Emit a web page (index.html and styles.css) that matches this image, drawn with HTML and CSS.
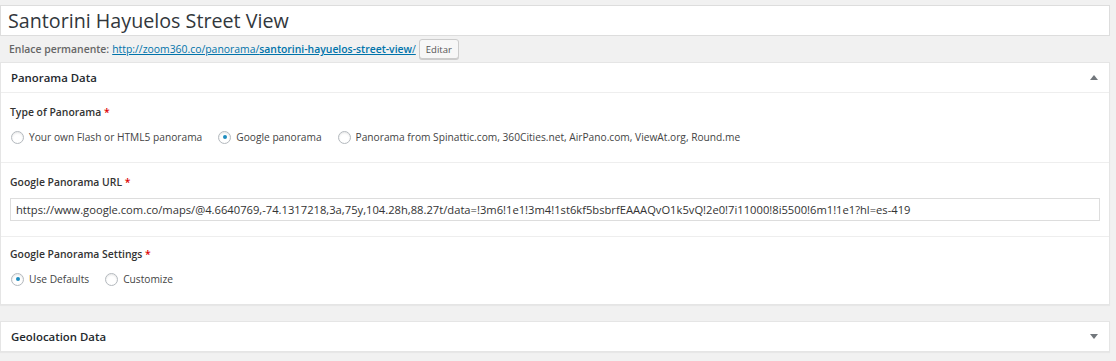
FILE: index.html
```html
<!DOCTYPE html>
<html lang="es">
<head>
    <meta charset="UTF-8">
    <meta name="viewport" content="width=device-width, initial-scale=1.0">
    <title>Editar Panorama</title>
    <link rel="stylesheet" href="styles.css">
</head>
<body>
    <div class="wrap">
        <input type="text" class="title-input" value="Santorini Hayuelos Street View">
        <div class="permalink">
            <strong>Enlace permanente:</strong>
            <a href="#">http://zoom360.co/panorama/<span class="slug">santorini-hayuelos-street-view</span>/</a>
            <button class="btn-small">Editar</button>
        </div>

        <div class="postbox">
            <div class="postbox-header">
                <h3>Panorama Data</h3>
                <span class="toggle up"></span>
            </div>
            <div class="field">
                <label class="field-label">Type of Panorama <span class="req">*</span></label>
                <ul class="radio-list">
                    <li><label><input type="radio" name="ptype"> Your own Flash or HTML5 panorama</label></li>
                    <li><label><input type="radio" name="ptype" checked> Google panorama</label></li>
                    <li><label><input type="radio" name="ptype"> Panorama from Spinattic.com, 360Cities.net, AirPano.com, ViewAt.org, Round.me</label></li>
                </ul>
            </div>
            <div class="field">
                <label class="field-label">Google Panorama URL <span class="req">*</span></label>
                <input type="text" class="text-input" value="https://www.google.com.co/maps/@4.6640769,-74.1317218,3a,75y,104.28h,88.27t/data=!3m6!1e1!3m4!1st6kf5bsbrfEAAAQvO1k5vQ!2e0!7i11000!8i5500!6m1!1e1?hl=es-419">
            </div>
            <div class="field last">
                <label class="field-label">Google Panorama Settings <span class="req">*</span></label>
                <ul class="radio-list">
                    <li><label><input type="radio" name="psettings" checked> Use Defaults</label></li>
                    <li><label><input type="radio" name="psettings"> Customize</label></li>
                </ul>
            </div>
        </div>

        <div class="postbox closed">
            <div class="postbox-header">
                <h3>Geolocation Data</h3>
                <span class="toggle down"></span>
            </div>
        </div>
    </div>
</body>
</html>
```

FILE: styles.css
```css
body {
    font-family: "Open Sans", Arial, sans-serif;
    margin: 0;
    padding: 0;
    background-color: #f1f1f1;
    color: #444;
    font-size: 13px;
}
.wrap {
    width: 1110px;
    padding-top: 5px;
}
.title-input {
    display: block;
    box-sizing: border-box;
    width: 100%;
    height: 31px;
    margin: 0;
    padding: 0 7px;
    border: 1px solid #ddd;
    background-color: #fff;
    font-family: "Open Sans", Arial, sans-serif;
    font-size: 19.7px;
    color: #32373c;
    outline: none;
}
.permalink {
    display: flex;
    align-items: center;
    height: 26px;
    padding-left: 9px;
    font-size: 10.4px;
    color: #666;
}
.permalink strong {
    font-weight: 600;
    margin-right: 3px;
}
.permalink a {
    color: #0073aa;
}
.permalink .slug {
    font-weight: 600;
}
.btn-small {
    height: 20px;
    margin-left: 3px;
    padding: 0 6px;
    border: 1px solid #ccc;
    border-radius: 3px;
    background-color: #f7f7f7;
    box-shadow: 0 1px 0 #ccc;
    font-family: "Open Sans", Arial, sans-serif;
    font-size: 9.5px;
    color: #555;
}
.postbox {
    background-color: #fff;
    border: 1px solid #e5e5e5;
    box-shadow: 0 1px 1px rgba(0, 0, 0, 0.04);
    margin-bottom: 16px;
}
.postbox-header {
    display: flex;
    align-items: center;
    justify-content: space-between;
    height: 28px;
    padding: 0 10px 1px 10px;
}
.postbox-header h3 {
    margin: 0;
    font-size: 11.4px;
    font-weight: 600;
    color: #23282d;
}
.toggle {
    width: 0;
    height: 0;
    margin-right: 1px;
    border-left: 4px solid transparent;
    border-right: 4px solid transparent;
}
.toggle.up {
    border-bottom: 5px solid #72777c;
}
.toggle.down {
    border-top: 5px solid #72777c;
}
.field {
    border-top: 1px solid #eee;
    padding: 11px 9px 15px;
}
.field.last {
    padding-top: 9px;
    padding-bottom: 15px;
}
.field-label {
    display: block;
    line-height: 16px;
    font-size: 10.4px;
    font-weight: 600;
    color: #333;
}
.req {
    color: #d00;
}
.radio-list {
    display: flex;
    list-style: none;
    margin: 7px 0 0;
    padding: 0;
}
.radio-list li {
    margin-right: 15px;
    line-height: 20px;
    font-size: 10.2px;
    color: #444;
}
.radio-list label {
    display: flex;
    align-items: center;
}
input[type="radio"] {
    appearance: none;
    -webkit-appearance: none;
    box-sizing: border-box;
    width: 13px;
    height: 13px;
    margin: 0 5px 0 1px;
    border: 1px solid #b4b9be;
    border-radius: 50%;
    background-color: #fff;
    box-shadow: inset 0 1px 2px rgba(0, 0, 0, 0.1);
    display: flex;
    align-items: center;
    justify-content: center;
}
input[type="radio"]:checked::before {
    content: "";
    width: 4px;
    height: 4px;
    border-radius: 50%;
    background-color: #1e8cbe;
}
.text-input {
    display: block;
    box-sizing: border-box;
    width: 100%;
    height: 23px;
    margin-top: 8px;
    padding: 0 5px;
    border: 1px solid #ddd;
    font-family: "Open Sans", Arial, sans-serif;
    font-size: 11.2px;
    color: #333;
    outline: none;
}
```
